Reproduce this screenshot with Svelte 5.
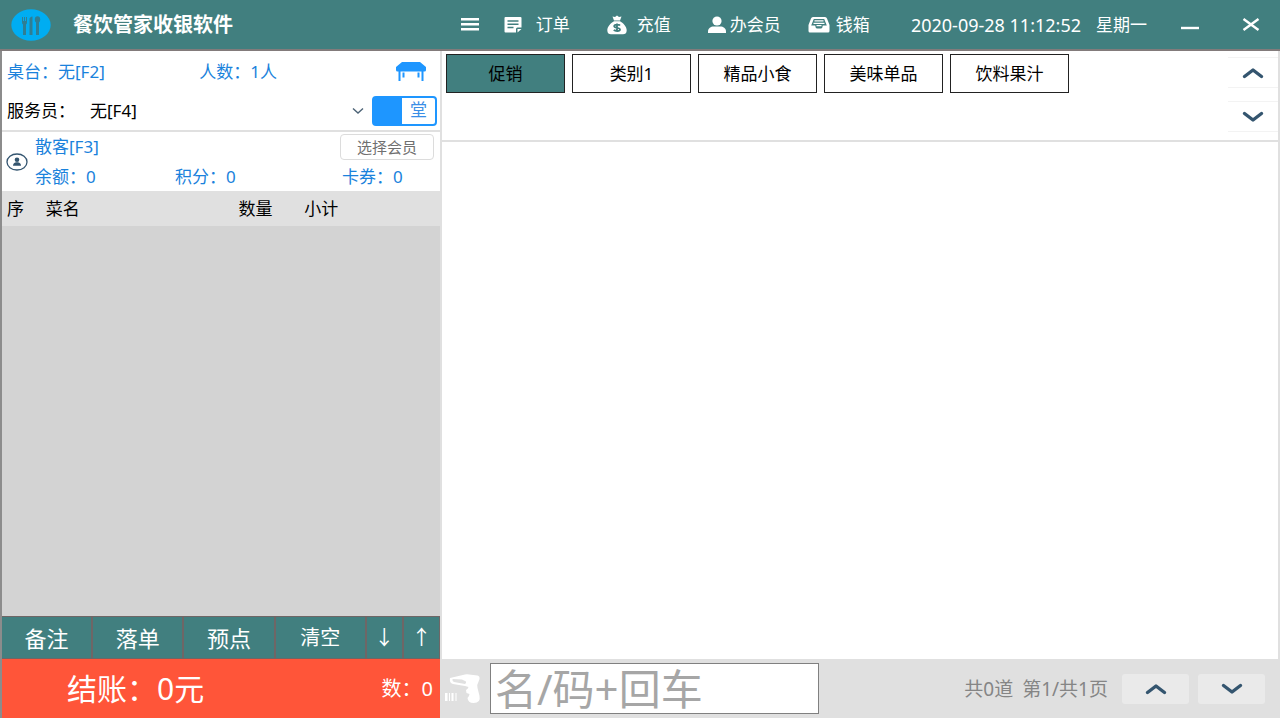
<script lang="ts">
	const categories: string[] = ['促销', '类别1', '精品小食', '美味单品', '饮料果汁'];
	let activeCategory = $state('促销');

	let waiter = $state('无[F4]');
	let dineIn = $state(true);
	let keyword = $state('');

	const actions = [
		{ name: '备注', kind: 'wide' },
		{ name: '落单', kind: 'wide' },
		{ name: '预点', kind: 'wide' },
		{ name: '清空', kind: 'wide small' },
		{ name: '↓', kind: 'arrow' },
		{ name: '↑', kind: 'arrow' }
	];
</script>

{#snippet chevron(up: boolean)}
	<svg class="chevron" viewBox="0 0 22 12" aria-hidden="true">
		<path d={up ? 'M2.500 9.500 11 3l8.500 6.500' : 'M2.500 2.500 11 9l8.500-6.500'} />
	</svg>
{/snippet}

<div class="app">
	<header class="topbar">
		<div class="brand">
			<svg class="logo" viewBox="0 0 40 32" aria-hidden="true">
				<ellipse cx="20" cy="16" rx="19.700" ry="15.700" fill="#00adf2" />
				<g fill="#2f7e93">
					<path d="M11 8h1v4h1V8h1v4h1V8h1v5q0 2-1 2.500V26h-3V15.500Q11 15 11 13z" />
					<path d="M18.500 26V10q0-2 3-2.500V26z" />
					<ellipse cx="26.500" cy="10.500" rx="2.700" ry="3.300" />
					<path d="M25 13h3v13h-3z" />
				</g>
			</svg>
			<h1>餐饮管家收银软件</h1>
		</div>

		<nav class="menu">
			<button class="menu-item" aria-label="菜单">
				<svg width="18" height="16" viewBox="0 0 18 16"><path d="M0 1h18v2.500H0zM0 6h18v2.500H0zM0 11h18v2.500H0z" /></svg>
			</button>
			<button class="menu-item order">
				<svg width="18" height="18" viewBox="0 0 18 18">
					<path d="M1.500 1h15q1 0 1 1v9.500h-4q-1.500 0-1.500 1.500v3.500H1.500q-1 0-1-1V2q0-1 1-1z" />
					<path d="M13.500 13h4l-4 3.500z" />
					<path class="cut" d="M3.500 5h11M3.500 8.300h11M3.500 11.500h6" />
				</svg>
				订单
			</button>
			<button class="menu-item recharge">
				<svg width="20" height="20" viewBox="0 0 20 20">
					<path d="M5.500 1.500 8 2 10 .5 12 2l2.500-.5L13 5.500H7zM7 6.200h6c3 1.500 6.700 5.500 6.700 9 0 3-1.700 4-3.700 4H4c-2 0-3.700-1-3.700-4C.3 11.700 4 7.700 7 6.200z" />
					<path class="cut bold" d="M13 10.500c-1-1.200-5.800-1.200-5.800.8 0 2.200 5.800 1 5.800 3.200 0 2-4.800 1.900-6.200.4M10 8.500v8.500" />
				</svg>
				充值
			</button>
			<button class="menu-item join">
				<svg width="18" height="18" viewBox="0 0 18 18">
					<ellipse cx="9" cy="5" rx="4.600" ry="4.600" />
					<path d="M0 17v-1.500C0 12 3 10.500 5.500 10.500h7C15 10.500 18 12 18 15.500V17z" />
				</svg>
				办会员
			</button>
			<button class="menu-item drawer">
				<svg width="22" height="18" viewBox="0 0 22 18">
					<path d="M5 1h12q1.500 0 2 1.500L21.500 9v6q0 1.500-1.500 1.500H2Q.5 16.500.5 15V9L3 2.500Q3.500 1 5 1z" />
					<path fill="#417f7f" d="M5.800 3h10.400l2.600 6.500h-4q-.3 3-1.800 3H9q-1.500 0-1.800-3h-4z" />
					<path d="M6.500 4.300h9v1.300h-9zM5.500 6.700h11v1.300h-11zM8.500 9h5v1.300h-5z" />
				</svg>
				钱箱
			</button>
		</nav>

		<div class="clock">
			<time datetime="2020-09-28T11:12:52">2020-09-28 11:12:52</time>
			<span class="weekday">星期一</span>
		</div>
		<div class="window-buttons">
			<button aria-label="最小化"><svg width="18" height="16" viewBox="0 0 18 16"><path d="M0 11h18" /></svg></button>
			<button aria-label="关闭"><svg width="18" height="16" viewBox="0 0 18 16"><path d="M1.500 2l15 11M16.500 2l-15 11" /></svg></button>
		</div>
	</header>

	<div class="workspace">
		<aside class="order-panel">
			<div class="table-row">
				<a href="#table">桌台：无[F2]</a>
				<a href="#people">人数：1人</a>
				<svg class="table-icon" width="30" height="20" viewBox="0 0 30 20" aria-hidden="true">
					<path d="M6 0h18l6 5v3q0 1.500-1.500 1.500h-27Q0 9.500 0 8V5zM2.500 9h2v10h-2zM25.500 9h2v10h-2zM6.500 10.500h2v5h-2zM21.500 10.500h2v5h-2z" />
				</svg>
			</div>

			<div class="waiter-row">
				<label for="waiter">服务员：</label>
				<div class="select-box">
					<select id="waiter" bind:value={waiter}>
						<option>无[F4]</option>
					</select>
					<svg width="12" height="8" viewBox="0 0 12 8" aria-hidden="true"><path d="M1 1.500 6 6l5-4.500" /></svg>
				</div>
				<label class="switch">
					<input type="checkbox" aria-label="堂食" bind:checked={dineIn} />
					<span class="knob"></span>
					<span class="switch-text">堂</span>
				</label>
			</div>

			<div class="member">
				<svg class="avatar" width="22" height="18" viewBox="0 0 22 18" aria-hidden="true">
					<ellipse cx="11" cy="9" rx="10" ry="8" fill="none" stroke="#345570" stroke-width="1.300" />
					<ellipse cx="11" cy="6.800" rx="2.300" ry="2.200" />
					<path d="M7 12.800q0-3 3-3.500h2q3 .5 3 3.500z" />
				</svg>
				<div class="member-info">
					<div class="member-head">
						<a href="#member">散客[F3]</a>
						<button class="pick">选择会员</button>
					</div>
					<div class="member-stats">
						<span>余额：0</span>
						<span>积分：0</span>
						<span>卡券：0</span>
					</div>
				</div>
			</div>

			<div class="dishes">
				<table>
					<colgroup><col class="c-no" /><col class="c-name" /><col class="c-count" /><col /></colgroup>
					<thead>
						<tr><th>序</th><th>菜名</th><th>数量</th><th>小计</th></tr>
					</thead>
				</table>
			</div>

			<div class="actions">
				{#each actions as action (action.name)}
					<button class={action.kind}>{action.name}</button>
				{/each}
			</div>

			<button class="checkout">
				<span class="total">结账：0元</span>
				<span class="count">数：0</span>
			</button>
		</aside>

		<main class="goods">
			<div class="category-bar">
				<div class="categories">
					{#each categories as category (category)}
						<button
							class="category"
							class:active={activeCategory === category}
							onclick={() => (activeCategory = category)}
						>
							{category}
						</button>
					{/each}
				</div>
				<div class="category-pager">
					<button aria-label="上一页分类">{@render chevron(true)}</button>
					<button aria-label="下一页分类">{@render chevron(false)}</button>
				</div>
			</div>

			<div class="goods-list"></div>

			<footer class="bottom-bar">
				<svg class="scanner" width="36" height="30" viewBox="0 0 36 30" aria-hidden="true">
					<path fill-rule="evenodd" d="M5 4 20 .5q2-.5 4 0l8.500 1q2.500.5 2 3.500L33 9q-1.500 2-.5 5l2 8q1.500 7-6 7-5.500 0-6-5 2-2 2-4l-3-1-.5-3q2-1 2.500-3L20 12 8 10Q4 9 5 4zM7.500 5q-.5 2.500 1.500 3l11 2q1.500-1 1-2.500L17 5.500z" />
					<path d="M0 19h2.500v8H0zM4 19h1v8H4zM6.500 19h2v8h-2zM10.500 19h1v8h-1z" />
				</svg>
				<input type="text" aria-label="名/码+回车" placeholder="名/码+回车" bind:value={keyword} />
				<div class="page-info"><span>共0道</span><span>第1/共1页</span></div>
				<div class="page-buttons">
					<button aria-label="上一页">{@render chevron(true)}</button>
					<button aria-label="下一页">{@render chevron(false)}</button>
				</div>
			</footer>
		</main>
	</div>
</div>

<style>
	:global(body) {
		margin: 0;
		background: #fff;
	}

	.app {
		--teal: #417f7f;
		--blue: #1a82dc;
		--line: #e0e0e0;
		--navy: #34556f;
		box-sizing: border-box;
		display: flex;
		flex-direction: column;
		min-height: 100vh;
		padding-bottom: 2px;
		font-family: 'Noto Sans', 'Noto Sans CJK SC', sans-serif;
		font-size: 17px;
		line-height: 24px;
		color: #000;
	}

	.app * {
		box-sizing: border-box;
	}

	button,
	input,
	select {
		margin: 0;
		padding: 0;
		border: 0;
		border-radius: 0;
		background: none;
		font: inherit;
		color: inherit;
	}

	button {
		cursor: pointer;
	}

	a {
		color: inherit;
		text-decoration: none;
	}

	svg {
		display: block;
		flex: none;
	}

	/* top bar */
	.topbar {
		display: flex;
		align-items: center;
		height: 51px;
		background: var(--teal);
		border-bottom: 2px solid #827b7b;
		color: #fff;
	}

	.brand {
		display: flex;
		align-items: center;
		gap: 22px;
		width: 36%;
		padding-left: 11px;
	}

	.logo {
		width: 40px;
		height: 32px;
	}

	h1 {
		margin: 0;
		font-size: 20px;
		line-height: 24px;
		font-weight: 700;
	}

	.menu {
		display: flex;
		align-items: center;
		gap: 25px;
	}

	.menu-item {
		display: flex;
		align-items: center;
		white-space: nowrap;
	}

	.menu-item svg {
		fill: #fff;
	}

	.menu-item .cut {
		fill: none;
		stroke: var(--teal);
		stroke-width: 1.4;
	}

	.menu-item .bold {
		stroke-width: 1.8;
	}

	.order {
		gap: 14px;
		padding-right: 12px;
	}

	.recharge {
		gap: 10px;
		padding-right: 12px;
	}

	.join {
		gap: 4px;
		padding-right: 2px;
	}

	.drawer {
		gap: 6px;
	}

	.clock {
		display: flex;
		gap: 15px;
		margin-left: auto;
		white-space: nowrap;
	}

	.clock time {
		font-size: 18px;
	}

	.window-buttons {
		display: flex;
		gap: 43px;
		padding: 0 20px 0 34px;
	}

	.window-buttons path {
		fill: none;
		stroke: #fff;
		stroke-width: 2.4;
	}

	/* left side */
	.workspace {
		flex: 1;
		display: grid;
		grid-template-columns: minmax(0, 221fr) minmax(0, 419fr);
	}

	.order-panel {
		display: flex;
		flex-direction: column;
		border-left: 2px solid #8c8c8c;
		border-right: 2px solid var(--line);
	}

	.table-row {
		display: grid;
		grid-template-columns: 44fr 45fr 30px;
		align-items: center;
		height: 41px;
		padding: 0 14px 0 5px;
		color: var(--blue);
	}

	.table-icon {
		fill: #1e96ff;
	}

	.waiter-row {
		display: flex;
		align-items: center;
		height: 40px;
		padding-left: 5px;
		padding-right: 3px;
		border-bottom: 2px solid var(--line);
	}

	.waiter-row > label:first-child {
		width: 83px;
	}

	.select-box {
		flex: 1;
		display: grid;
		align-items: center;
	}

	.select-box > * {
		grid-area: 1 / 1;
	}

	.select-box select {
		width: 100%;
		appearance: none;
	}

	.select-box svg {
		justify-self: end;
		margin-right: 8px;
		pointer-events: none;
	}

	.select-box path {
		fill: none;
		stroke: #4c6376;
		stroke-width: 1.4;
	}

	.switch {
		display: flex;
		width: 65px;
		height: 30px;
		border: 2px solid #1e96ff;
		border-radius: 4px;
		cursor: pointer;
	}

	.switch input {
		appearance: none;
		width: 0;
	}

	.knob {
		width: 28px;
		background: #1e96ff;
	}

	.switch-text {
		flex: 1;
		text-align: center;
		color: #3a8ee6;
	}

	.member {
		display: flex;
		align-items: center;
		gap: 7px;
		height: 59px;
		padding: 0 6px 0 4px;
		color: var(--blue);
	}

	.avatar {
		fill: var(--navy);
	}

	.member-info {
		flex: 1;
	}

	.member-head {
		display: flex;
		justify-content: space-between;
		align-items: center;
		height: 30px;
	}

	.pick {
		width: 94px;
		height: 26px;
		border: 1px solid #dcdcdc;
		border-radius: 4px;
		font-size: 15px;
		color: #707070;
	}

	.member-stats {
		display: grid;
		grid-template-columns: 140fr 167fr 92fr;
		height: 29px;
		align-items: center;
	}

	.dishes {
		flex: 1;
		background: #d3d3d3;
	}

	table {
		width: 100%;
		table-layout: fixed;
		border-collapse: collapse;
		background: var(--line);
	}

	th {
		height: 35px;
		padding: 0;
		font-weight: 400;
		text-align: left;
	}

	th:first-child {
		padding-left: 5px;
	}

	.c-no {
		width: 10%;
	}

	.c-name {
		width: 44%;
	}

	.c-count {
		width: 15%;
	}

	.actions {
		display: flex;
		gap: 2px;
		padding: 1px 1px 1px 0;
		background: #6f6666;
	}

	.actions button {
		height: 41px;
		background: var(--teal);
		color: #fff;
		font-size: 22px;
	}

	.actions .wide {
		flex: 89;
	}

	.actions .small,
	.actions .arrow {
		font-size: 20px;
	}

	.actions .arrow {
		flex: 35;
	}

	.checkout {
		display: flex;
		justify-content: space-between;
		align-items: center;
		height: 59px;
		padding: 0 7px 0 65px;
		background: #ff5539;
		color: #fff;
	}

	.total {
		font-size: 30px;
	}

	.count {
		font-size: 20px;
	}

	/* right side */
	.goods {
		display: flex;
		flex-direction: column;
		border-right: 2px solid var(--line);
	}

	.category-bar {
		display: flex;
		justify-content: space-between;
		min-height: 91px;
		border-bottom: 2px solid var(--line);
	}

	.categories {
		display: flex;
		flex-wrap: wrap;
		align-content: flex-start;
		gap: 7px;
		padding: 3px 4px;
	}

	.category {
		width: 119px;
		height: 39px;
		border: 1px solid #222;
	}

	.category.active {
		background: var(--teal);
	}

	.category-pager {
		display: flex;
		flex-direction: column;
		gap: 13px;
		width: 50px;
		padding-top: 6px;
	}

	.category-pager button {
		display: grid;
		place-items: center;
		height: 31px;
		border-top: 1px solid #f3f3f3;
		border-bottom: 1px solid #f3f3f3;
	}

	.chevron {
		width: 22px;
		height: 12px;
	}

	.chevron path {
		fill: none;
		stroke: var(--navy);
		stroke-width: 3.4;
		stroke-linecap: round;
		stroke-linejoin: round;
	}

	.goods-list {
		flex: 1;
	}

	.bottom-bar {
		display: flex;
		align-items: center;
		height: 59px;
		padding: 0 13px 0 3px;
		background: var(--line);
	}

	.scanner {
		fill: #fff;
	}

	.bottom-bar input {
		width: 329px;
		height: 51px;
		margin-left: 9px;
		padding: 0 4px;
		border: 1px solid #808080;
		background: #fff;
		font-size: 42px;
	}

	.bottom-bar input::placeholder {
		color: #a6a6a6;
	}

	.page-info {
		display: flex;
		gap: 9px;
		margin-left: auto;
		font-size: 19px;
		color: #858585;
		white-space: nowrap;
	}

	.page-buttons {
		display: flex;
		gap: 9px;
		margin-left: 14px;
	}

	.page-buttons button {
		display: grid;
		place-items: center;
		width: 67px;
		height: 30px;
		border-radius: 3px;
		background: #eaeaea;
	}
</style>
